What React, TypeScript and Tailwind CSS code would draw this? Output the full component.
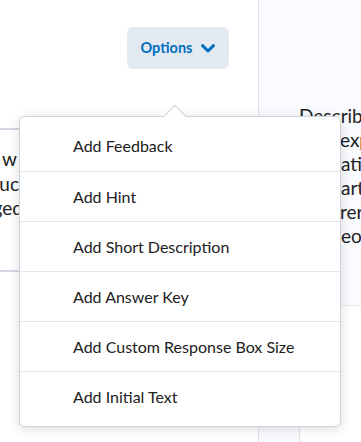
import React from "react";

const items = [
  "Add Feedback",
  "Add Hint",
  "Add Short Description",
  "Add Answer Key",
  "Add Custom Response Box Size",
  "Add Initial Text",
];

export default function App() {
  return (
    <div className="relative w-[361px] h-[442px] overflow-hidden bg-white font-['Lato',sans-serif] text-[#202122]">
      <div className="flex h-full">
        <div className="w-[259px] shrink-0 border-r border-[#dfe4eb] flex flex-col">
          <div className="flex justify-end pr-[29px] pt-[27px]">
            <button className="h-[42px] w-[102px] rounded-[6px] bg-[#e3e9f1] flex items-center justify-center gap-[9px] text-[14.5px] font-bold text-[#006fbf]">
              <span>Options</span>
              <svg width="14" height="9" viewBox="0 0 14 9" fill="none">
                <path d="M1.6 1.6 L7 7 L12.4 1.6" stroke="#006fbf" strokeWidth="3" strokeLinecap="round" strokeLinejoin="round" />
              </svg>
            </button>
          </div>
          <div className="mt-[59px] h-[144px] border-t-2 border-b-2 border-[#d3d9e3] pt-[17px] text-[19px] leading-[24.5px]">
            <div className="w-[19px] overflow-hidden">
              <div className="flex justify-end whitespace-nowrap pr-[2px]">w</div>
              <div className="flex justify-end whitespace-nowrap">produc</div>
              <div className="flex justify-end whitespace-nowrap">
                <span className="mr-[-4px]">changed</span>
              </div>
            </div>
          </div>
        </div>
        <div className="flex-1 flex flex-col min-w-0">
          <div className="h-[306px] bg-[#f9fbff] border-b border-[#e3e9f1] pl-[40px] pt-[104px] text-[19px] leading-[24px] overflow-hidden whitespace-nowrap">
            <div>Describe the</div>
            <div className="ml-[41px]">explain</div>
            <div className="ml-[42px]">ation</div>
            <div className="ml-[42px]">art</div>
            <div className="ml-[41px]">rern</div>
            <div className="ml-[42px]">eo</div>
          </div>
          <div className="flex-1" />
          <div className="h-[15px] w-[41px] bg-[#f9fbff] border-r border-[#dfe4eb]" />
        </div>
      </div>

      <div className="absolute left-[19px] top-[116px] w-[322px] h-[311px] bg-white border border-[#cdd5dc] rounded-[6px] shadow-[0_2px_12px_rgba(0,0,0,0.14)] pt-[4px] pb-[5px] text-[16px]">
        {items.map((t, i) => (
          <div
            key={t}
            className={
              i === 0
                ? "h-[50px] flex items-center pl-[53px]"
                : "h-[50px] flex items-center pl-[53px] border-t border-[#e3e9f1]"
            }
          >
            {t}
          </div>
        ))}
      </div>
      <div className="absolute left-[167px] top-[108px] w-[16px] h-[16px] bg-white border-t border-l border-[#cdd5dc] rotate-45" />
    </div>
  );
}
